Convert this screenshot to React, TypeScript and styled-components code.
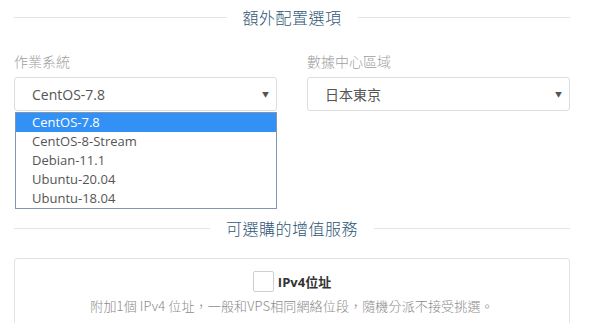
import React from "react";
import styled, { createGlobalStyle } from "styled-components";

const Global = createGlobalStyle`
  html, body { margin: 0; padding: 0; background: #fff; }
  body { font-family: "Open Sans", "Noto Sans CJK TC", sans-serif; }
  * { box-sizing: border-box; }
`;

const Page = styled.div`
  width: 589px;
  height: 323px;
  overflow: hidden;
  padding: 0 19px 0 14px;
`;

const SectionHeader = styled.div<{ $mt?: number }>`
  display: flex;
  align-items: center;
  height: 34px;
  margin-top: ${(p) => p.$mt ?? 0}px;
`;

const Rule = styled.div`
  flex: 1;
  border-top: 1px solid #e4e4e4;
`;

const SectionTitle = styled.div`
  padding: 0 16px;
  font-size: 16px;
  color: #2f5676;
  font-family: "Noto Sans CJK TC", sans-serif;
  font-weight: 300;
  letter-spacing: 0.5px;
`;

const FieldRow = styled.div`
  display: grid;
  grid-template-columns: 1fr 1fr;
  column-gap: 30px;
  margin-top: 17px;
`;

const Field = styled.div`
  position: relative;
  display: flex;
  flex-direction: column;
`;

const Label = styled.div`
  font-size: 14px;
  line-height: 20px;
  color: #a0a0a0;
  font-family: "Noto Sans CJK TC", sans-serif;
  font-weight: 300;
  margin-bottom: 6px;
`;

const SelectBox = styled.div`
  position: relative;
  height: 34px;
  border: 1px solid #dedede;
  border-radius: 3px;
  display: flex;
  align-items: center;
  padding-left: 17px;
  font-size: 14px;
  color: #555;
  font-family: "Open Sans", "Noto Sans CJK TC", sans-serif;
`;

const Arrow = styled.span`
  position: absolute;
  right: 7px;
  top: 50%;
  transform: translateY(-50%);
  font-size: 7px;
  color: #555;
`;

const DropList = styled.div`
  position: absolute;
  left: 1px;
  right: 0;
  top: 61px;
  border: 1px solid #8196b0;
  background: #fff;
  padding: 0;
  z-index: 2;
`;

const Option = styled.div<{ $active?: boolean }>`
  height: 19px;
  line-height: 19px;
  padding-left: 16px;
  font-size: 13px;
  color: ${(p) => (p.$active ? "#fff" : "#555")};
  background: ${(p) => (p.$active ? "#3391f5" : "transparent")};
  font-family: "Open Sans", sans-serif;
`;

const Card = styled.div`
  margin-top: 13px;
  border: 1px solid #e2e2e2;
  border-radius: 3px;
  padding: 12px 10px 20px;
  display: flex;
  flex-direction: column;
  align-items: center;
`;

const CheckRow = styled.label`
  display: flex;
  align-items: center;
  gap: 4px;
`;

const CheckBox = styled.span`
  width: 21px;
  height: 21px;
  border: 1px solid #cfcfcf;
  border-radius: 2px;
  background: #fff;
`;

const CheckText = styled.span`
  font-size: 13px;
  font-weight: 700;
  color: #333;
  font-family: "Open Sans", "Noto Sans CJK TC", sans-serif;
`;

const Desc = styled.div`
  margin-top: 4px;
  font-size: 13px;
  line-height: 20px;
  color: #8a8a8a;
  font-family: "Noto Sans CJK TC", sans-serif;
  font-weight: 300;
  letter-spacing: 0.15px;
`;

const osOptions = ["CentOS-7.8", "CentOS-8-Stream", "Debian-11.1", "Ubuntu-20.04", "Ubuntu-18.04"];

export default function App() {
  return (
    <Page>
      <Global />
      <SectionHeader>
        <Rule />
        <SectionTitle>額外配置選項</SectionTitle>
        <Rule />
      </SectionHeader>
      <FieldRow>
        <Field>
          <Label>作業系統</Label>
          <SelectBox>
            CentOS-7.8
            <Arrow>▼</Arrow>
          </SelectBox>
          <DropList>
            {osOptions.map((o, i) => (
              <Option key={o} $active={i === 0}>
                {o}
              </Option>
            ))}
          </DropList>
        </Field>
        <Field>
          <Label>數據中心區域</Label>
          <SelectBox>
            日本東京
            <Arrow>▼</Arrow>
          </SelectBox>
        </Field>
      </FieldRow>
      <SectionHeader $mt={100}>
        <Rule />
        <SectionTitle>可選購的增值服務</SectionTitle>
        <Rule />
      </SectionHeader>
      <Card>
        <CheckRow>
          <CheckBox />
          <CheckText>IPv4位址</CheckText>
        </CheckRow>
        <Desc>附加1個 IPv4 位址，一般和VPS相同網絡位段，隨機分派不接受挑選。</Desc>
      </Card>
    </Page>
  );
}
